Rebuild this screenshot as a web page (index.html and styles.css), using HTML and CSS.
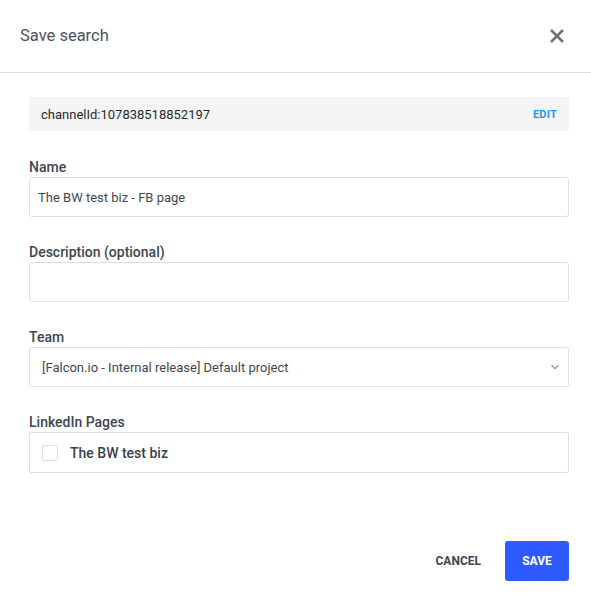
FILE: index.html
```html
<!DOCTYPE html>
<html>
<head>
<meta charset="utf-8">
<link rel="stylesheet" href="styles.css">
</head>
<body>
<div class="modal">
  <div class="header">
    <div class="title">Save search</div>
    <svg class="close" width="16" height="16" viewBox="0 0 16 16"><path d="M2 2L14 14M14 2L2 14" stroke="#6b737b" stroke-width="2.6" stroke-linecap="butt"/></svg>
  </div>
  <div class="body">
    <div class="query">
      <span class="query-text">channelId:107838518852197</span>
      <span class="edit">EDIT</span>
    </div>
    <div class="field">
      <div class="label">Name</div>
      <div class="input name-input">The BW test biz - FB page</div>
    </div>
    <div class="field">
      <div class="label">Description (optional)</div>
      <div class="input"></div>
    </div>
    <div class="field">
      <div class="label">Team</div>
      <div class="input select">
        <span>[Falcon.io - Internal release] Default project</span>
        <svg width="10" height="6" viewBox="0 0 10 6"><path d="M1.5 1.2L5 4.6L8.5 1.2" fill="none" stroke="#8a9096" stroke-width="1.2"/></svg>
      </div>
    </div>
    <div class="field">
      <div class="label">LinkedIn Pages</div>
      <div class="input pages">
        <span class="checkbox"></span>
        <span class="page-name">The BW test biz</span>
      </div>
    </div>
  </div>
  <div class="footer">
    <button class="btn cancel">CANCEL</button>
    <button class="btn save">SAVE</button>
  </div>
</div>
</body>
</html>
```
FILE: styles.css
```css
* { box-sizing: border-box; }
html, body { margin: 0; padding: 0; background: #fff; }
body { font-family: Roboto, "Liberation Sans", sans-serif; color: #3d4650; }
.modal { width: 591px; height: 596px; display: flex; flex-direction: column; }
.header {
  height: 73px;
  border-bottom: 1px solid #dcdfe2;
  display: flex;
  align-items: center;
  justify-content: space-between;
  padding: 0 26px 2px 20px;
}
.title { font-size: 16.5px; color: #4a535c; }
.close { display: block; margin-top: 2px; }
.body { padding: 24px 22px 0 29px; display: flex; flex-direction: column; }
.query {
  height: 34px;
  background: #f4f4f4;
  display: flex;
  align-items: center;
  justify-content: space-between;
  padding: 0 12px;
}
.query-text { font-size: 13px; color: #262b30; }
.edit { font-size: 11px; font-weight: 700; color: #1c9ae6; letter-spacing: 0.2px; }
.field { margin-top: 26px; }
.query + .field { margin-top: 27px; }
.label { font-size: 14px; font-weight: 500; line-height: 18px; color: #3d4650; margin-bottom: 1px; }
.input {
  height: 40px;
  border: 1px solid #dcdfe2;
  border-radius: 3px;
  display: flex;
  align-items: center;
  font-size: 13px;
  color: #3f4850;
}
.name-input { padding: 0 8px; }
.select { padding: 0 8px 0 12px; justify-content: space-between; }
.select svg { display: block; }
.pages { height: 41px; border-radius: 2px; padding: 0 12px; }
.checkbox {
  width: 16px; height: 16px;
  border: 1px solid #dcdfe2;
  border-radius: 2px;
  margin-right: 12px;
}
.page-name { font-size: 14px; font-weight: 500; color: #3a424a; }
.footer {
  margin-top: auto;
  display: flex;
  justify-content: flex-end;
  align-items: center;
  padding: 0 22px 15px 0;
  gap: 24px;
}
.btn {
  font-family: Roboto, "Liberation Sans", sans-serif;
  font-size: 12px;
  font-weight: 700;
  border: none;
  background: none;
  cursor: pointer;
  height: 40px;
  border-radius: 3px;
}
.cancel { color: #3d4650; padding: 0; }
.save { background: #2d5bff; color: #fff; width: 64px; padding: 0; }
```
